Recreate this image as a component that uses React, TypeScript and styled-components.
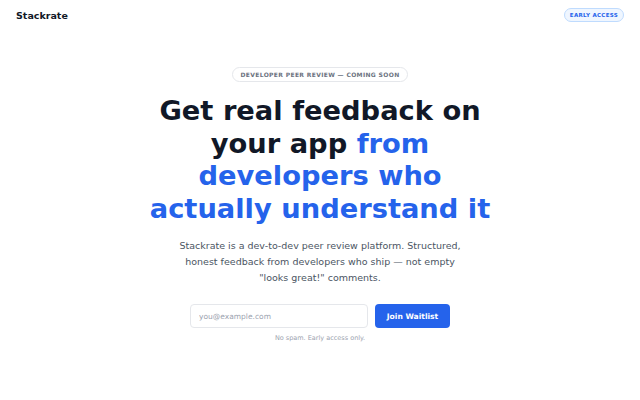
import React from "react";
import styled, { createGlobalStyle } from "styled-components";

const GlobalStyle = createGlobalStyle`
  html, body {
    margin: 0;
    padding: 0;
    background: #ffffff;
    font-family: "DejaVu Sans", sans-serif;
    color: #111827;
  }
`;

const Page = styled.div`
  min-height: 400px;
  display: flex;
  flex-direction: column;
`;

const Header = styled.header`
  display: flex;
  align-items: center;
  justify-content: space-between;
  padding: 8px 16px 0 16px;
  height: 14px;
`;

const Logo = styled.div`
  font-size: 9.5px;
  font-weight: 700;
  color: #111827;
`;

const AccessBadge = styled.span`
  font-size: 5.5px;
  font-weight: 700;
  letter-spacing: 0.3px;
  color: #2563eb;
  background: #eff6ff;
  border: 1px solid #bfdbfe;
  border-radius: 999px;
  padding: 3px 5px;
`;

const Hero = styled.main`
  display: flex;
  flex-direction: column;
  align-items: center;
  text-align: center;
  padding-top: 45px;
`;

const Pill = styled.div`
  font-size: 6px;
  font-weight: 700;
  letter-spacing: 0.35px;
  color: #6b7280;
  border: 1px solid #e5e7eb;
  border-radius: 999px;
  padding: 3px 7px;
`;

const Title = styled.h1`
  margin: 13px 0 0 0;
  max-width: 360px;
  font-size: 27.3px;
  line-height: 32.5px;
  font-weight: 700;
  color: #111827;
`;

const Accent = styled.span`
  color: #2563eb;
`;

const Lead = styled.p`
  margin: 13px 0 0 0;
  max-width: 290px;
  font-size: 9.5px;
  line-height: 16px;
  color: #4b5563;
`;

const Form = styled.form`
  display: flex;
  gap: 7px;
  margin-top: 18px;
`;

const EmailInput = styled.input`
  box-sizing: border-box;
  width: 178px;
  height: 24px;
  border: 1px solid #e5e7eb;
  border-radius: 4px;
  padding: 0 8px;
  font-family: "DejaVu Sans", sans-serif;
  font-size: 7.5px;
  color: #111827;
  outline: none;
  &::placeholder {
    color: #9ca3af;
  }
`;

const JoinButton = styled.button`
  height: 24px;
  width: 75px;
  border: none;
  border-radius: 4px;
  background: #2563eb;
  color: #ffffff;
  font-family: "DejaVu Sans", sans-serif;
  font-size: 7.6px;
  font-weight: 700;
  cursor: pointer;
`;

const Note = styled.p`
  margin: 6px 0 0 0;
  font-size: 6.5px;
  color: #9ca3af;
`;

export default function App() {
  return (
    <Page>
      <GlobalStyle />
      <Header>
        <Logo>Stackrate</Logo>
        <AccessBadge>EARLY ACCESS</AccessBadge>
      </Header>
      <Hero>
        <Pill>DEVELOPER PEER REVIEW — COMING SOON</Pill>
        <Title>
          Get real feedback on your app <Accent>from developers who actually understand it</Accent>
        </Title>
        <Lead>
          Stackrate is a dev-to-dev peer review platform. Structured, honest feedback from
          developers who ship — not empty "looks great!" comments.
        </Lead>
        <Form onSubmit={(e) => e.preventDefault()}>
          <EmailInput type="email" placeholder="you@example.com" />
          <JoinButton type="submit">Join Waitlist</JoinButton>
        </Form>
        <Note>No spam. Early access only.</Note>
      </Hero>
    </Page>
  );
}
